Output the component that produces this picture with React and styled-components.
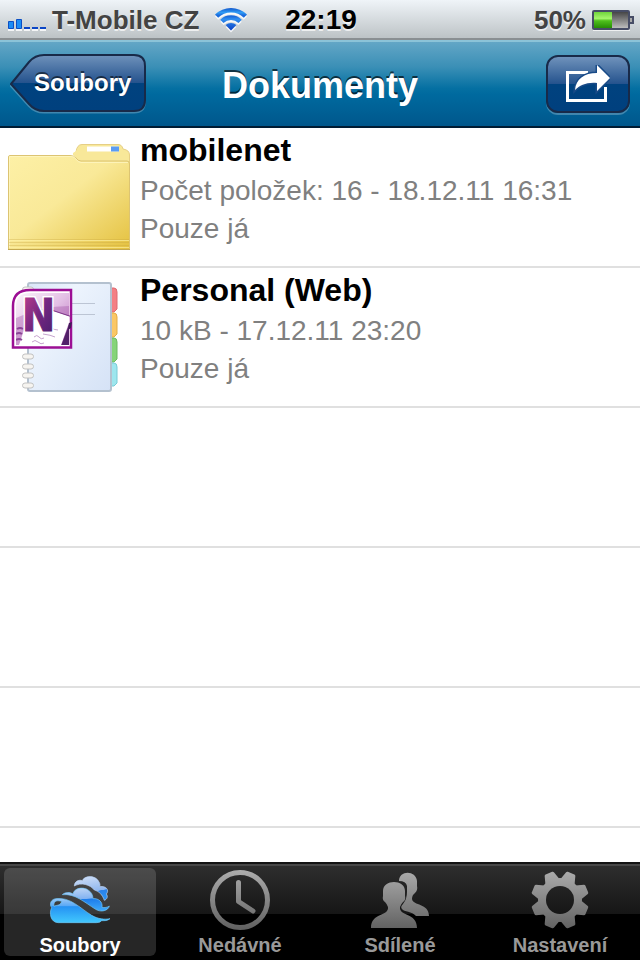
import React, { useState } from "react";
import styled, { createGlobalStyle } from "styled-components";

const GlobalStyle = createGlobalStyle`
    * {
        box-sizing: border-box;
    }
    body {
        margin: 0;
        background: #000;
        font-family: "Liberation Sans", Arial, Helvetica, sans-serif;
    }
    button {
        font: inherit;
        border: 0;
        margin: 0;
        padding: 0;
        background: none;
        cursor: pointer;
    }
    svg {
        display: block;
        flex: none;
    }
`;

const Screen = styled.div`
    display: flex;
    flex-direction: column;
    height: 100vh;
    background: #fff;
`;

const StatusBar = styled.div`
    display: grid;
    grid-template-columns: 1fr auto 1fr;
    align-items: center;
    height: 40px;
    padding: 0 6px 0 8px;
    border-bottom: 2px solid #8a8f92;
    background: linear-gradient(#eff4f8, #bdc3c6);
    color: #434343;
    font-size: 26px;
    line-height: 40px;
    font-weight: bold;
    text-shadow: 0 2px 0 rgba(255, 255, 255, 0.7);
    white-space: nowrap;
`;

const StatusGroup = styled.div`
    display: flex;
    align-items: center;
    justify-content: ${({ $end }) => ($end ? "flex-end" : "flex-start")};
    gap: ${({ $gap }) => $gap}px;
`;

const Clock = styled.time`
    color: #000;
    font-size: 28px;
`;

const NavBar = styled.header`
    display: grid;
    grid-template-columns: 1fr auto 1fr;
    align-items: center;
    height: 88px;
    padding: 0 10px;
    border-top: 2px solid #8cc3d8;
    border-bottom: 2px solid #001c34;
    background: linear-gradient(#63a6c6, #3a8fb6 30%, #0570a2 55%, #006a9f 62%, #00578c);
`;

const Title = styled.h1`
    margin: 0;
    padding-top: 4px;
    color: #fff;
    font-size: 36px;
    line-height: 44px;
    text-shadow: 0 -2px 0 rgba(0, 0, 0, 0.65);
`;

const BackButton = styled.button`
    position: relative;
    width: 136px;
    height: 60px;
    padding: 0 16px 2px 24px;
    color: #fff;
    font-size: 24px;
    font-weight: bold;
    text-shadow: 0 -2px 0 rgba(0, 0, 0, 0.55);

    svg {
        position: absolute;
        inset: 0;
    }
    span {
        position: relative;
    }
`;

const ShareButton = styled.button`
    justify-self: end;
    display: flex;
    align-items: center;
    justify-content: center;
    width: 84px;
    height: 58px;
    border: 2px solid #182a49;
    border-radius: 12px;
    background: linear-gradient(#6f92bb, #24528d 50%, #00427f 50%, #00407e);
    box-shadow: 0 2px 0 rgba(255, 255, 255, 0.25);
`;

const FileList = styled.ul`
    flex: 1 1 0;
    min-height: 0;
    overflow: hidden;
    list-style: none;
    margin: 0;
    padding: 0;
`;

const FileRow = styled.li`
    display: flex;
    height: 140px;
    border-bottom: 2px solid #e0e0e0;
`;

const FileText = styled.div`
    min-width: 0;
    color: #808080;
    font-size: 28px;
    line-height: 38px;
    white-space: nowrap;

    h2,
    p {
        margin: 0;
    }
    h2 {
        color: #000;
        font-size: 32px;
        line-height: 44px;
    }
`;

const TabBar = styled.nav`
    display: grid;
    grid-template-columns: repeat(4, 1fr);
    gap: 8px;
    height: 98px;
    padding: 2px 4px 4px;
    border-top: 2px solid #141414;
    background: linear-gradient(#474747 2px, #2e2e2e 2px, #161616 50px, #000 50px);
`;

const Tab = styled.button`
    display: flex;
    flex-direction: column;
    align-items: center;
    align-self: end;
    height: 88px;
    border-radius: 6px;
    background: ${({ $active }) => ($active ? "rgba(255, 255, 255, 0.15)" : "none")};
    color: ${({ $active }) => ($active ? "#fff" : "#999")};
    font-size: 20px;
    line-height: 22px;
    font-weight: bold;
`;

function SignalIcon() {
    return (
        <svg width="38" height="24" viewBox="0 0 38 24" aria-hidden="true">
            <path
                d="M0 21h6v2H0zM8 21h6v2H8zM16 21h6v2h-6zM24 21h6v2h-6zM32 21h6v2h-6z"
                fill="#fff"
                opacity="0.8"
            />
            <path d="M.5 13.5h5v7h-5zM8.500 11.500h5v9h-5z" fill="#1c8df5" stroke="#0c4fc4" />
            <path d="M16 19h6v2h-6zM24 19h6v2h-6zM32 19h6v2h-6z" fill="#0b46c6" />
        </svg>
    );
}

function WifiIcon() {
    return (
        <svg width="32" height="26" viewBox="0 0 32 26" aria-hidden="true">
            <defs>
                <linearGradient id="wifi" x1="0" y1="0" x2="0" y2="1">
                    <stop offset="0" stopColor="#1258cc" />
                    <stop offset="0.2" stopColor="#2f9bf5" />
                    <stop offset="0.35" stopColor="#1763d8" />
                    <stop offset="0.5" stopColor="#2f8ff0" />
                    <stop offset="1" stopColor="#0a3fc4" />
                </linearGradient>
            </defs>
            <path
                transform="translate(0 2)"
                fill="#fff"
                opacity="0.8"
                d="M0 7.500A23 23 0 0 1 32 7.500L28.800 10.800A18 18 0 0 0 3.200 10.800zM5.200 12.700A15.500 15.500 0 0 1 26.800 12.700L23.500 16A11 11 0 0 0 8.500 16zM10.600 18A8 8 0 0 1 21.400 18L16 23.500z"
            />
            <path
                fill="url(#wifi)"
                d="M0 7.500A23 23 0 0 1 32 7.500L28.800 10.800A18 18 0 0 0 3.200 10.800zM5.200 12.700A15.500 15.500 0 0 1 26.800 12.700L23.500 16A11 11 0 0 0 8.500 16zM10.600 18A8 8 0 0 1 21.400 18L16 23.500z"
            />
        </svg>
    );
}

function BatteryIcon() {
    return (
        <svg width="42" height="22" viewBox="0 0 42 22" aria-hidden="true">
            <defs>
                <linearGradient id="charge" x1="0" y1="0" x2="0" y2="1">
                    <stop offset="0" stopColor="#6fd43c" />
                    <stop offset="0.4" stopColor="#a5f56c" />
                    <stop offset="0.55" stopColor="#4fc01c" />
                    <stop offset="1" stopColor="#268c05" />
                </linearGradient>
                <linearGradient id="empty" x1="0" y1="0" x2="0" y2="1">
                    <stop offset="0" stopColor="#3f3f3f" />
                    <stop offset="1" stopColor="#c4c4c4" />
                </linearGradient>
            </defs>
            <path d="M1 20h37v2H1z" fill="#fff" opacity="0.7" />
            <rect x="1" y="2" width="36" height="18" rx="1" fill="url(#empty)" stroke="#474d66" strokeWidth="2" />
            <path d="M2 3h18v16H2z" fill="url(#charge)" />
            <path d="M38 8h3v6h-3" fill="#aaa" stroke="#474d66" strokeWidth="2" />
        </svg>
    );
}

function BackShape() {
    return (
        <svg width="136" height="60" viewBox="0 0 136 60" aria-hidden="true">
            <defs>
                <linearGradient id="back" x1="0" y1="0" x2="0" y2="1">
                    <stop offset="0" stopColor="#6f92bb" />
                    <stop offset="0.5" stopColor="#24528d" />
                    <stop offset="0.5" stopColor="#00427f" />
                    <stop offset="1" stopColor="#00407e" />
                </linearGradient>
            </defs>
            <path
                d="M1 32L19 10Q25 3 34 3H124Q135 3 135 14V47Q135 58.500 124 58.500H34Q25 58.500 19 52Z"
                fill="none"
                stroke="#fff"
                strokeWidth="2"
                opacity="0.25"
            />
            <path
                d="M1 30L19 8Q25 1 34 1H124Q135 1 135 12V46Q135 57 124 57H34Q25 57 19 50Z"
                fill="url(#back)"
                stroke="#182a49"
                strokeWidth="2"
            />
        </svg>
    );
}

function ShareIcon() {
    return (
        <svg width="44" height="38" viewBox="0 0 44 38" aria-hidden="true">
            <path d="M22 7.500H1.500V35.500H39.500V22" fill="none" stroke="#fff" strokeWidth="3" />
            <path
                d="M31 0L44 13L31 26V18C21 17 14 20 9 25C10 14 18 8 31 8Z"
                fill="#fff"
                stroke="#184a87"
                strokeWidth="3"
                paintOrder="stroke"
            />
        </svg>
    );
}

function FolderIcon() {
    return (
        <svg width="140" height="138" viewBox="0 0 140 138" aria-hidden="true">
            <defs>
                <linearGradient id="folder" x1="0" y1="0" x2="1" y2="1">
                    <stop offset="0" stopColor="#fdf0a6" />
                    <stop offset="0.45" stopColor="#f9e998" />
                    <stop offset="1" stopColor="#e4c13f" />
                </linearGradient>
            </defs>
            <path
                d="M76 40V24Q77 16.500 82 16.500H118Q122 16.500 123 21Q129.500 22 129.500 27V40Z"
                fill="#f8e899"
                stroke="#e6cf85"
            />
            <path d="M87 18.500h32v5H87z" fill="#fff" />
            <path d="M111 18.500h8v5h-8z" fill="#5b9cf3" />
            <path
                d="M8.500 29Q8.500 27.500 10 27.500H70Q74 27.500 76 30Q78 33 81 33H127Q129.500 33 129.500 36V121.500H8.500Z"
                fill="url(#folder)"
                stroke="#dcc472"
            />
            <path d="M73 27V25Q77 23 78 20V31Z" fill="#f8e899" />
            <path d="M9.500 120V28.500H72Q75 29 76 31Q78 34.500 81 34.500H128" fill="none" stroke="#fff8c8" opacity="0.7" />
            <path d="M9 111.500H129M9 114.500H129M9 117.500H129" stroke="#c6a33c" opacity="0.3" />
            <path d="M9 112.500H129M9 119.500H129" stroke="#fff3a8" opacity="0.6" />
            <path d="M8 121.500H130" stroke="#c4a850" />
        </svg>
    );
}

function NotebookIcon() {
    const rings = [21, 88, 98, 107, 117];
    return (
        <svg width="140" height="138" viewBox="0 0 140 138" aria-hidden="true">
            <defs>
                <linearGradient id="page" x1="0" y1="0" x2="1" y2="1">
                    <stop offset="0" stopColor="#dbe7f9" />
                    <stop offset="0.3" stopColor="#edf4fd" />
                    <stop offset="1" stopColor="#d5e2f6" />
                </linearGradient>
                <linearGradient id="badge" x1="0" y1="0" x2="1" y2="1">
                    <stop offset="0" stopColor="#fbf4fb" />
                    <stop offset="0.5" stopColor="#e3bfe5" />
                    <stop offset="1" stopColor="#b568b8" />
                </linearGradient>
                <linearGradient id="letter" x1="0" y1="0" x2="1" y2="1">
                    <stop offset="0" stopColor="#c4418f" />
                    <stop offset="0.5" stopColor="#742680" />
                    <stop offset="1" stopColor="#43206d" />
                </linearGradient>
                <clipPath id="badgeClip">
                    <path d="M16 77V38Q16 25 30 25H69V77Z" />
                </clipPath>
            </defs>
            <g strokeWidth="1">
                <path d="M111 20h3q3 0 3 4v17l-3 3h-3z" fill="#f47f84" stroke="#de6b72" />
                <path d="M111 45h3q3 0 3 4v17l-3 3h-3z" fill="#fbc765" stroke="#e3ac46" />
                <path d="M111 70h3q3 0 3 4v17l-3 3h-3z" fill="#86d479" stroke="#6cba62" />
                <path d="M111 95h3q3 0 3 4v16l-3 3h-3z" fill="#9de6ee" stroke="#79ccd6" />
            </g>
            <rect x="28" y="15" width="83" height="108" rx="2" fill="url(#page)" stroke="#b4c1cf" strokeWidth="2" />
            <path d="M70 35.500H95M70 46.500H95" stroke="#bcc5d4" />
            {rings.map((y) => (
                <rect
                    key={y}
                    x="22.500"
                    y={y - 2}
                    width="11"
                    height="5"
                    rx="2.500"
                    fill="#f6f4f0"
                    stroke="#c2c2c2"
                />
            ))}
            <path d="M13 79.500V38Q13 22 30 22H71V79.500Z" fill="#fff" stroke="#9c0f94" strokeWidth="2.500" />
            <g clipPath="url(#badgeClip)">
                <path d="M16 77V25H69V77Z" fill="url(#badge)" />
                <path d="M16 50Q42 38 69 38V77H16Z" fill="#a558ab" opacity="0.4" />
                <path d="M24 44L50 42L71 49L60 80H18L24 62Z" fill="#fff" />
                <path d="M70 54L61 78H71Z" fill="#522069" />
                <path d="M17 61q3-2 6 0M16 66q3-2 6 0M16 72q3-2 6 0" fill="none" stroke="#8a4596" strokeWidth="2" />
                <path
                    d="M51 60q4 2 7 2M43 66q8 1 12 3M34 69q3-3 5 0t5 1M32 74q3-3 6 0t6 1"
                    fill="none"
                    stroke="#c4a3cd"
                />
            </g>
            <path d="M50 41.500L71 48.500" stroke="#7d3688" />
            <path d="M69 55L72 54L71 60L68 62Z" fill="#431b5a" />
            <g
                fontFamily="'Liberation Sans Narrow', 'DejaVu Sans Condensed', sans-serif"
                fontWeight="bold"
                fontSize="44">
                <text x="22" y="63" fill="#fff" stroke="#fff" strokeWidth="4" aria-hidden="true">
                    N
                </text>
                <text x="22" y="63" fill="url(#letter)" stroke="url(#letter)">
                    N
                </text>
            </g>
        </svg>
    );
}

// shared grey gradient of the inactive tab icons
function GreyFill({ id }) {
    return (
        <defs>
            <linearGradient id={id} gradientUnits="userSpaceOnUse" x1="0" y1="2" x2="0" y2="62">
                <stop offset="0" stopColor="#adadad" />
                <stop offset="1" stopColor="#606060" />
            </linearGradient>
        </defs>
    );
}

function CloudIcon() {
    return (
        <svg width="80" height="66" viewBox="0 0 240 198" aria-hidden="true">
            <defs>
                <linearGradient id="cloudBack" x1="0" y1="0" x2="0.25" y2="1">
                    <stop offset="0" stopColor="#d3e1f7" />
                    <stop offset="0.72" stopColor="#8fb6ee" />
                    <stop offset="0.74" stopColor="#2b82ea" />
                    <stop offset="1" stopColor="#2b8ff2" />
                </linearGradient>
                <linearGradient id="cloudMid" x1="0" y1="0" x2="0.1" y2="1">
                    <stop offset="0" stopColor="#c0d6f6" />
                    <stop offset="0.5" stopColor="#83b3f1" />
                    <stop offset="0.52" stopColor="#1c7bea" />
                    <stop offset="1" stopColor="#3ba4f8" />
                </linearGradient>
                <linearGradient id="cloudFront" x1="0" y1="0" x2="0" y2="1">
                    <stop offset="0" stopColor="#9cc8f7" />
                    <stop offset="0.3" stopColor="#5aa9f5" />
                    <stop offset="0.34" stopColor="#2592f3" />
                    <stop offset="1" stopColor="#42c8fd" />
                </linearGradient>
            </defs>
            <g transform="translate(15 6)" stroke="#70c8fa" strokeWidth="2">
                <path
                    fill="url(#cloudBack)"
                    stroke="#b9d3f6"
                    d="M88 48C88 34 102 28 112 32C118 16 152 14 162 36C166 42 165 46 164 50C184 46 194 62 184 72C190 80 186 88 178 91C172 74 162 64 148 60C136 44 108 36 88 48Z"
                />
                <path
                    fill="url(#cloudMid)"
                    d="M52 74C60 66 75 66 84 72C88 54 112 50 128 59C138 65 144 74 144 86C160 84 174 96 171 112C178 114 188 112 193 108C190 122 168 128 152 118C120 98 90 70 52 74Z"
                />
                <path
                    fill="url(#cloudFront)"
                    fillRule="evenodd"
                    d="M20 113C12 102 18 88 32 86C76 80 104 114 140 136C160 148 180 149 195 146C187 153 178 152 170 152Q166 158 154 158H40C16 158 12 128 20 113ZM27 109C36 104 46 108 50 94C40 91 24 90 27 109Z"
                />
            </g>
        </svg>
    );
}

function RecentIcon() {
    return (
        <svg width="80" height="66" viewBox="0 0 80 66" aria-hidden="true">
            <GreyFill id="greyClock" />
            <g fill="none" stroke="url(#greyClock)" strokeWidth="5">
                <circle cx="40" cy="32" r="27.500" />
                <path d="M38.500 14.500V33.500L53 43" strokeLinecap="round" strokeLinejoin="round" />
            </g>
        </svg>
    );
}

function PeopleIcon() {
    return (
        <svg width="80" height="66" viewBox="0 0 80 66" aria-hidden="true">
            <GreyFill id="greyPeople" />
            <g fill="url(#greyPeople)">
                <path d="M39 13C39 2 56 2 57 13V18Q58 22 55 25Q52 27 52 31C53 38 69 35 69 48H56C52 43 44 44 42 41Q40 39 43 36Q47 31 47 24V18Q46 13 39 13Z" />
                <path d="M23 23C23 11 45 11 45 23V28Q46 32 43 34Q41 36 40 39C39 49 57 44 57 60H11C11 44 29 49 28 39Q27 36 25 34Q22 32 23 28Z" />
            </g>
        </svg>
    );
}

const TOOTH = "M32.500 12L35 4Q35.500 3 36.500 3H43.500Q44.500 3 45 4L47.500 12Z";

function GearIcon() {
    return (
        <svg width="80" height="66" viewBox="0 0 80 66" aria-hidden="true">
            <GreyFill id="greyGear" />
            <defs>
                <mask id="gearShape">
                    <g fill="#fff">
                        <circle cx="40" cy="32" r="22" />
                        {[0, 1, 2, 3, 4, 5, 6, 7].map((i) => (
                            <path key={i} d={TOOTH} transform={`rotate(${22.5 + i * 45} 40 32)`} />
                        ))}
                    </g>
                    <circle cx="40" cy="32" r="14" fill="#000" />
                </mask>
            </defs>
            <rect width="80" height="66" fill="url(#greyGear)" mask="url(#gearShape)" />
        </svg>
    );
}

const files = [
    {
        name: "mobilenet",
        info: "Počet položek: 16 - 18.12.11 16:31",
        access: "Pouze já",
        Icon: FolderIcon,
    },
    {
        name: "Personal (Web)",
        info: "10 kB - 17.12.11 23:20",
        access: "Pouze já",
        Icon: NotebookIcon,
    },
];

const tabs = [
    { label: "Soubory", Icon: CloudIcon },
    { label: "Nedávné", Icon: RecentIcon },
    { label: "Sdílené", Icon: PeopleIcon },
    { label: "Nastavení", Icon: GearIcon },
];

export default function App() {
    const [active, setActive] = useState("Soubory");

    return (
        <Screen>
            <GlobalStyle />
            <StatusBar>
                <StatusGroup $gap={16}>
                    <StatusGroup $gap={6}>
                        <SignalIcon />
                        <span>T-Mobile CZ</span>
                    </StatusGroup>
                    <WifiIcon />
                </StatusGroup>
                <Clock>22:19</Clock>
                <StatusGroup $end $gap={6}>
                    <span>50%</span>
                    <BatteryIcon />
                </StatusGroup>
            </StatusBar>
            <NavBar>
                <BackButton type="button">
                    <BackShape />
                    <span>Soubory</span>
                </BackButton>
                <Title>Dokumenty</Title>
                <ShareButton type="button" aria-label="Sdílet">
                    <ShareIcon />
                </ShareButton>
            </NavBar>
            <FileList>
                {files.map(({ name, info, access, Icon }) => (
                    <FileRow key={name}>
                        <Icon />
                        <FileText>
                            <h2>{name}</h2>
                            <p>{info}</p>
                            <p>{access}</p>
                        </FileText>
                    </FileRow>
                ))}
                <FileRow aria-hidden="true" />
                <FileRow aria-hidden="true" />
                <FileRow aria-hidden="true" />
            </FileList>
            <TabBar>
                {tabs.map(({ label, Icon }) => (
                    <Tab
                        key={label}
                        type="button"
                        $active={active === label}
                        onClick={() => setActive(label)}>
                        <Icon />
                        <span>{label}</span>
                    </Tab>
                ))}
            </TabBar>
        </Screen>
    );
}
